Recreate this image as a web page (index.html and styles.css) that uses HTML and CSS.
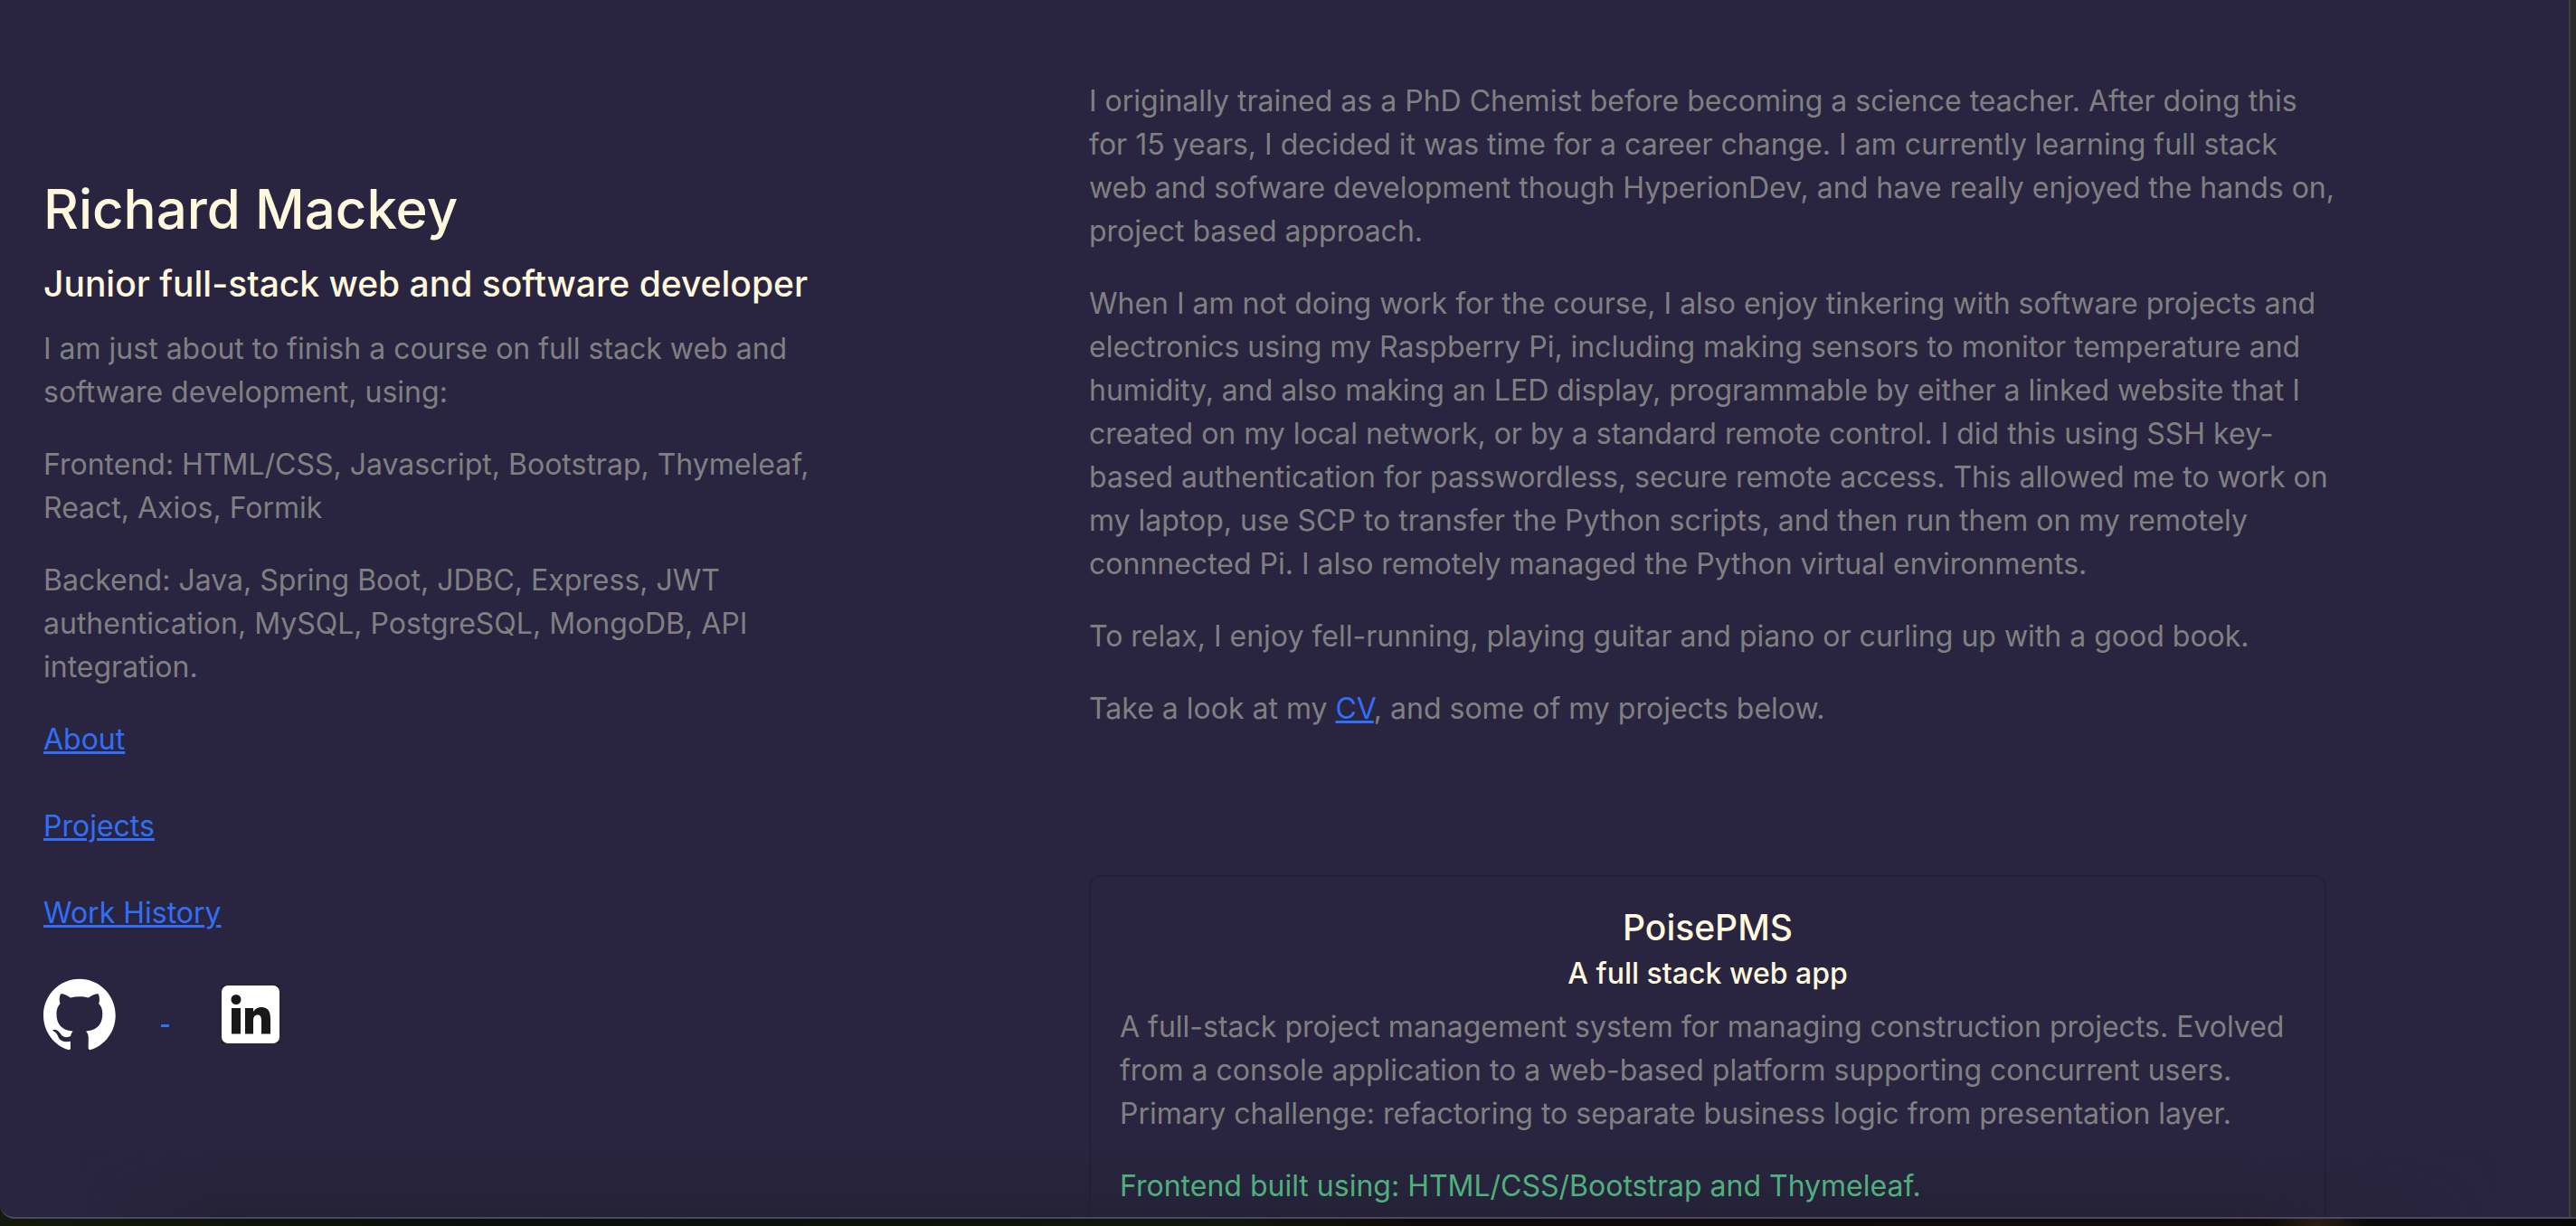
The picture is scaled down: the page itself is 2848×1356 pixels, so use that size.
FILE: index.html
```html
<!DOCTYPE html>
<html lang="en">
<head>
<meta charset="utf-8">
<meta name="viewport" content="width=device-width, initial-scale=1">
<title>Richard Mackey</title>
<link rel="stylesheet" href="styles.css">
</head>
<body>
<div class="window">
  <div class="page">
    <header class="intro">
      <h1 class="name">Richard Mackey</h1>
      <h2 class="role">Junior full-stack web and software developer</h2>
      <p>I am just about to finish a course on full stack web and software development, using:</p>
      <p>Frontend: HTML/CSS, Javascript, Bootstrap, Thymeleaf, React, Axios, Formik</p>
      <p>Backend: Java, Spring Boot, JDBC, Express, JWT authentication, MySQL, PostgreSQL, MongoDB, API integration.</p>
      <nav class="menu">
        <a href="#about">About</a>
        <a href="#projects">Projects</a>
        <a href="#work">Work History</a>
      </nav>
      <div class="social">
        <a href="#github" aria-label="GitHub"><svg class="github" viewBox="0 0 98 96" aria-hidden="true"><path fill="#fff" fill-rule="evenodd" clip-rule="evenodd" d="M48.854 0C21.839 0 0 22 0 49.217c0 21.756 13.993 40.172 33.405 46.69 2.427.49 3.316-1.059 3.316-2.362 0-1.141-.08-5.052-.08-9.127-13.59 2.934-16.42-5.867-16.42-5.867-2.184-5.704-5.42-7.17-5.42-7.17-4.448-3.015.324-3.015.324-3.015 4.934.326 7.523 5.052 7.523 5.052 4.367 7.496 11.404 5.378 14.235 4.074.404-3.178 1.699-5.378 3.074-6.6-10.839-1.141-22.243-5.378-22.243-24.283 0-5.378 1.94-9.778 5.014-13.2-.485-1.222-2.184-6.275.486-13.038 0 0 4.125-1.304 13.426 5.052a46.97 46.97 0 0 1 12.214-1.63c4.125 0 8.33.571 12.213 1.63 9.302-6.356 13.427-5.052 13.427-5.052 2.67 6.763.97 11.816.485 13.038 3.155 3.422 5.015 7.822 5.015 13.2 0 18.905-11.404 23.06-22.324 24.283 1.78 1.548 3.316 4.481 3.316 9.126 0 6.6-.08 11.897-.08 13.526 0 1.304.89 2.853 3.316 2.364 19.412-6.52 33.405-24.935 33.405-46.691C97.707 22 75.788 0 48.854 0z"/></svg>&nbsp;</a>
        <a href="#linkedin" aria-label="LinkedIn"><svg class="linkedin" viewBox="0 0 64 64" aria-hidden="true"><path fill="#1b1b20" d="M0 0h64v64H0z"/><rect width="64" height="64" rx="7" fill="#fff"/><g fill="#191919"><circle cx="16" cy="15.500" r="5.500"/><path d="M11 25h10v28.500H11zM26 25h9v4c2-3.500 5.500-5 9-5 7.500 0 10 5 10 13v16.500H44V39c0-4-1-6.500-4-6.500-3.500 0-5 2.500-5 6.500v14.500h-9z"/></g></svg></a>
      </div>
    </header>
    <main class="content">
      <section id="about">
        <p>I originally trained as a PhD Chemist before becoming a science teacher. After doing this for 15 years, I decided it was time for a career change. I am currently learning full stack web and sofware development though HyperionDev, and have really enjoyed the hands on, project based approach.</p>
        <p>When I am not doing work for the course, I also enjoy tinkering with software projects and electronics using my Raspberry Pi, including making sensors to monitor temperature and humidity, and also making an LED display, programmable by either a linked website that I created on my local network, or by a standard remote control. I did this using SSH key-based authentication for passwordless, secure remote access. This allowed me to work on my laptop, use SCP to transfer the Python scripts, and then run them on my remotely connnected Pi. I also remotely managed the Python virtual environments.</p>
        <p>To relax, I enjoy fell-running, playing guitar and piano or curling up with a good book.</p>
        <p>Take a look at my <a href="#cv">CV</a>, and some of my projects below.</p>
      </section>
      <section id="projects">
        <article class="card">
          <h3 class="card-title">PoisePMS</h3>
          <h4 class="card-subtitle">A full stack web app</h4>
          <p>A full-stack project management system for managing construction projects. Evolved from a console application to a web-based platform supporting concurrent users. Primary challenge: refactoring to separate business logic from presentation layer.</p>
          <p class="stack">Frontend built using: HTML/CSS/Bootstrap and Thymeleaf.</p>
        </article>
      </section>
    </main>
  </div>
</div>
</body>
</html>
```
FILE: styles.css
```css
* { box-sizing: border-box; }

body {
  margin: 0;
  height: 100vh;
  overflow: hidden;
  padding-bottom: 8px;
  background: linear-gradient(90deg, #14190c, #0a0d09 20%, #12160c 48%, #0f0a08 55%, #0e0b09 88%, #2a1e16 90%, #0a0a0a 92%, #060808);
  color: #808080;
  font: 32px/48px Inter, "Liberation Sans", sans-serif;
}

/* browser window frame over the desktop */
.window {
  position: relative;
  height: 100%;
  overflow: hidden;
  background: #292541;
  border-bottom: 2px solid #4b4860;
  border-bottom-left-radius: 16px;
}

/* scrollbar track */
.window::before {
  content: "";
  position: absolute;
  inset: 0 0 0 auto;
  width: 6px;
  background: #2b2b2b;
  border-left: 2px solid #403f3d;
}

/* soft shade along the lower edge */
.window::after {
  content: "";
  position: absolute;
  inset: auto 80px 0;
  height: 80px;
  background: linear-gradient(transparent, rgba(30, 30, 40, 0.4));
  mask-image: linear-gradient(90deg, transparent, #000 160px, #000 calc(100% - 300px), transparent);
  pointer-events: none;
}

.page {
  position: relative;
  z-index: 1;
  display: grid;
  grid-template-columns: 289fr 346fr;
  padding: 0 260px 0 48px;
}

p { margin: 0 0 32px; }

a {
  color: #316ff6;
  text-decoration: underline;
  text-decoration-thickness: 3px;
}

.intro {
  max-width: 880px;
  padding-top: 192px;
}

.name,
.role,
.card-title,
.card-subtitle {
  color: #fff8dc;
  font-weight: 500;
}

.name {
  margin: 0 0 20px;
  font-size: 60px;
  line-height: 78px;
}

.role {
  margin: 0 0 24px;
  font-size: 39px;
  line-height: 48px;
}

.menu {
  display: flex;
  flex-direction: column;
  align-items: flex-start;
  gap: 48px;
}

.social {
  display: flex;
  align-items: center;
  gap: 58px;
  margin-top: 48px;
}

.social svg { vertical-align: middle; }

.github {
  width: 80px;
  height: 80px;
  margin-right: 50px;
}

.linkedin {
  width: 64px;
  height: 64px;
}

.content { padding-top: 88px; }

#about { margin-bottom: 160px; }

#about p:last-child { margin-bottom: 0; }

.card {
  margin-right: 16px;
  padding: 32px;
  border: 2px solid #222037;
  border-radius: 12px;
}

.card-title,
.card-subtitle { text-align: center; }

.card-title {
  margin: 0 0 8px;
  font-size: 39px;
  line-height: 48px;
}

.card-subtitle {
  margin: 0 0 16px;
  font-size: 32px;
  line-height: 38px;
}

.stack { color: #4fb07b; }
```
